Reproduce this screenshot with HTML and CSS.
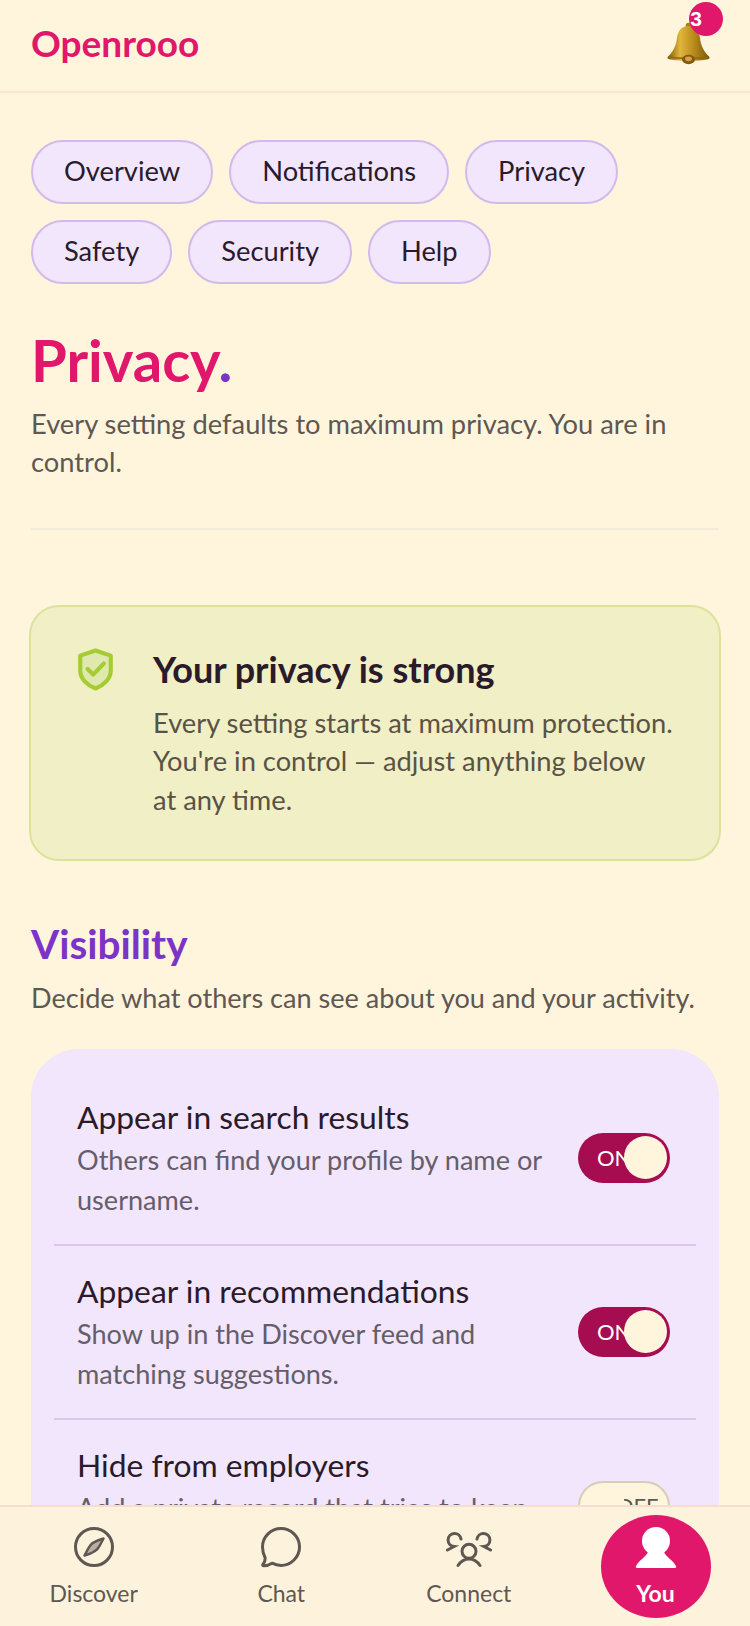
FILE: index.html
```html
<!DOCTYPE html>
<html lang="en">

<head>
    <meta charset="UTF-8">
    <meta name="viewport" content="width=device-width, initial-scale=1.0">
    <title>Openrooo - Privacy</title>
    <link rel="stylesheet" href="styles.css">
</head>

<body>
    <div class="app">
        <header class="topbar">
            <span class="logo">Openrooo</span>
            <button class="bell" aria-label="Notifications">
                <svg class="bell-icon" viewBox="0 0 44 43" width="44" height="43">
                    <defs>
                        <linearGradient id="bellGold" x1="0" y1="0" x2="1" y2="0">
                            <stop offset="0" stop-color="#7d5a0a" />
                            <stop offset="0.3" stop-color="#e2b63c" />
                            <stop offset="0.62" stop-color="#b98c1c" />
                            <stop offset="1" stop-color="#7a5608" />
                        </linearGradient>
                    </defs>
                    <circle cx="21.500" cy="3.500" r="2.800" fill="#a87f18" />
                    <path d="M21.500 4C14 4 11 9 10 16C9 24 6 30 1 34.500C0 35.500 0.500 37 2 37.200C8 38.300 15 38.700 21.500 38.700C28 38.700 35 38.300 41 37.200C42.500 37 43 35.500 42 34.500C37 30 34 24 33 16C32 9 29 4 21.500 4Z" fill="url(#bellGold)" />
                    <path d="M3 35C10 36.600 33 36.600 40 35" fill="none" stroke="#8f6a10" stroke-width="1.500" />
                    <ellipse cx="21.500" cy="37.500" rx="6.500" ry="4.700" fill="#85590f" />
                    <ellipse cx="21.500" cy="36.800" rx="3.500" ry="2.400" fill="#d6a050" />
                </svg>
                <span class="badge">3</span>
            </button>
        </header>

        <main class="content">
            <nav class="tabs">
                <a class="tab">Overview</a>
                <a class="tab">Notifications</a>
                <a class="tab">Privacy</a>
                <a class="tab">Safety</a>
                <a class="tab">Security</a>
                <a class="tab">Help</a>
            </nav>

            <div class="page-head">
                <h1>Privacy<span class="dot">.</span></h1>
                <p class="page-sub">Every setting defaults to maximum privacy. You are in control.</p>
            </div>

            <section class="strong-card">
                <svg class="shield" viewBox="0 0 40 46" width="37" height="43">
                    <path d="M20 2.500L36.500 8V24C36.500 33 29 40 20 43.500C11 40 3.500 33 3.500 24V8Z" fill="#dfe9ad" stroke="#a5cc32" stroke-width="4.500" stroke-linejoin="round" />
                    <path d="M11.500 22.500L17.500 28.500L29 16.500" fill="none" stroke="#a5cc32" stroke-width="4.500" stroke-linecap="round" stroke-linejoin="round" />
                </svg>
                <div class="strong-text">
                    <h2>Your privacy is strong</h2>
                    <p>Every setting starts at maximum protection. You're in control — adjust anything below<br>at any time.</p>
                </div>
            </section>

            <h3 class="section-title">Visibility</h3>
            <p class="section-sub">Decide what others can see about you and your activity.</p>

            <section class="settings">
                <div class="row">
                    <div class="row-text">
                        <div class="row-title">Appear in search results</div>
                        <div class="row-desc">Others can find your profile by name or username.</div>
                    </div>
                    <div class="toggle on"><span class="toggle-label">ON</span><span class="knob"></span></div>
                </div>
                <div class="row">
                    <div class="row-text">
                        <div class="row-title">Appear in recommendations</div>
                        <div class="row-desc">Show up in the Discover feed and matching suggestions.</div>
                    </div>
                    <div class="toggle on"><span class="toggle-label">ON</span><span class="knob"></span></div>
                </div>
                <div class="row">
                    <div class="row-text">
                        <div class="row-title">Hide from employers</div>
                        <div class="row-desc">Add a private record that tries to keep you hidden.</div>
                    </div>
                    <div class="toggle off"><span class="knob"></span><span class="toggle-label">OFF</span></div>
                </div>
            </section>
        </main>

        <nav class="bottom-nav">
            <a class="nav-item">
                <svg viewBox="0 0 44 44" width="44" height="44" fill="none" stroke="#5f5751" stroke-width="3">
                    <circle cx="22" cy="22" r="18.500" />
                    <path d="M31.500 13.500C26 15 18.500 18.500 16.500 23L12.500 30.500C18 29 25.500 25.500 27.500 21Z" fill="#b9b0a4" stroke-width="2.500" stroke-linejoin="round" />
                </svg>
                <span>Discover</span>
            </a>
            <a class="nav-item">
                <svg viewBox="0 0 44 44" width="44" height="44" fill="none" stroke="#5f5751" stroke-width="3" stroke-linejoin="round">
                    <path d="M22 3.500C32 3.500 40.500 11.500 40.500 22C40.500 32 32 40.500 22 40.500C18.500 40.500 15.500 39.500 13 38.200C10 40 7 41 4.500 40.800C3.500 40.700 3.500 39.800 4 39.200C5.500 37.500 6.300 35.500 6.200 33C4.500 29.500 3.500 26 3.500 22C3.500 11.500 12 3.500 22 3.500Z" />
                </svg>
                <span>Chat</span>
            </a>
            <a class="nav-item">
                <svg viewBox="0 -7 46 44" width="46" height="44" fill="none" stroke="#5f5751" stroke-width="3" stroke-linecap="round">
                    <circle cx="23" cy="19.300" r="7" />
                    <path d="M12 33.500C15 29 19 27 23 27C27 27 31 29 34 33.500" />
                    <path d="M15 7A6.500 6.500 0 1 0 8 14.500L1.500 18" />
                    <path d="M31 7A6.500 6.500 0 1 1 38 14.500L44.500 18" />
                </svg>
                <span>Connect</span>
            </a>
            <a class="nav-item active">
                <svg viewBox="0 0 42 42" width="42" height="42" fill="#fff">
                    <circle cx="21" cy="14" r="14" />
                    <path d="M13 25H29C31 30 38 33 41 39C41.500 40 41 41 40 41H2C1 41 0.500 40 1 39C4 33 11 30 13 25Z" />
                </svg>
                <span>You</span>
            </a>
        </nav>
    </div>
</body>

</html>
```

FILE: styles.css
```css
* {
    margin: 0;
    padding: 0;
    box-sizing: border-box;
}

body {
    font-family: 'Lato', 'Noto Sans', sans-serif;
    background: #fff5dd;
    color: #2a1a2a;
}

.app {
    height: 100vh;
    display: flex;
    flex-direction: column;
    overflow: hidden;
}

.topbar {
    flex: none;
    height: 93px;
    display: flex;
    align-items: flex-start;
    justify-content: space-between;
    padding: 0 39px 0 31px;
    border-bottom: 2px solid #f9e6d3;
}

.logo {
    margin-top: 21px;
    font-size: 37px;
    line-height: 44px;
    font-weight: 700;
    color: #e0176b;
}

.bell {
    position: relative;
    margin-top: 22px;
    width: 44px;
    height: 43px;
    background: none;
    border: none;
}

.bell-icon {
    display: block;
}

.badge {
    position: absolute;
    top: -20px;
    left: 22px;
    width: 34px;
    height: 34px;
    padding-right: 20px;
    border-radius: 50%;
    background: #e0176b;
    color: #fff;
    font-size: 21px;
    font-weight: 700;
    line-height: 34px;
    text-align: center;
}

.content {
    flex: 1;
    min-height: 0;
    overflow: hidden;
    padding: 47px 31px 0;
}

.tabs {
    display: flex;
    flex-wrap: wrap;
    gap: 16px;
}

.tab {
    height: 64px;
    padding: 0 31px 4px;
    display: flex;
    align-items: center;
    border: 2px solid #d4b9ec;
    border-radius: 32px;
    background: #f1e6fb;
    color: #2a1a2a;
    font-size: 27.300px;
}

.page-head {
    margin-top: 40px;
    padding-bottom: 46px;
    border-bottom: 2px solid #f3ecd9;
}

h1 {
    font-size: 58px;
    line-height: 72px;
    font-weight: 700;
    color: #e0176b;
}

.dot {
    color: #7c33c8;
}

.page-sub {
    margin-top: 9px;
    font-size: 27.300px;
    line-height: 38.400px;
    color: #5f5751;
}

.strong-card {
    margin: 75px -2px 0;
    height: 256px;
    padding: 41px 38px 0 46px;
    display: flex;
    align-items: flex-start;
    gap: 39px;
    background: #f0efc5;
    border: 2px solid #dbe39b;
    border-radius: 30px;
}

.shield {
    flex: none;
}

.strong-text h2 {
    font-size: 36px;
    line-height: 42px;
    font-weight: 700;
    color: #2a1a2a;
}

.strong-text p {
    margin-top: 14px;
    font-size: 27.300px;
    line-height: 38.500px;
    color: #5a5246;
}

.section-title {
    margin-top: 57px;
    font-size: 40.500px;
    line-height: 52px;
    font-weight: 700;
    color: #7c33c8;
}

.section-sub {
    margin-top: 9px;
    font-size: 27.100px;
    line-height: 38px;
    color: #5f5751;
}

.settings {
    margin-top: 32px;
    padding: 23px 23px 0;
    background: #f1e6fb;
    border-radius: 48px;
}

.row {
    display: flex;
    align-items: center;
    gap: 24px;
    padding: 25px 26px 23px 23px;
    border-bottom: 2px solid #dcc6ee;
}

.row:last-child {
    border-bottom: none;
}

.row-text {
    flex: 1;
}

.row-title {
    font-size: 31.800px;
    line-height: 40px;
    color: #2a1a2a;
}

.row-desc {
    margin-top: 3px;
    font-size: 27.100px;
    line-height: 40.500px;
    color: #655d6a;
}

.toggle {
    flex: none;
    width: 92px;
    height: 50px;
    margin-bottom: 2px;
    padding: 0 3px 0 19px;
    display: flex;
    align-items: center;
    justify-content: space-between;
    border-radius: 25px;
    font-size: 22px;
    overflow: hidden;
}

.toggle.on {
    background: #a60d50;
    color: #fff;
}

.toggle.on .knob {
    margin-left: -14px;
}

.toggle.off {
    padding: 0 12px 0 2px;
    background: #fff5dd;
    border: 2px solid #d8cdb8;
    color: #5f5751;
}

.toggle.off .knob {
    margin-right: -9px;
}

.toggle-label {
    flex: none;
}

.knob {
    flex: none;
    width: 43px;
    height: 43px;
    border-radius: 50%;
    background: #fff5dd;
    z-index: 1;
}

.bottom-nav {
    flex: none;
    height: 121px;
    display: grid;
    grid-template-columns: repeat(4, 1fr);
    background: #fdf3dc;
    border-top: 2px solid #f9dcd0;
}

.nav-item {
    display: flex;
    flex-direction: column;
    align-items: center;
    justify-content: flex-start;
    gap: 9px;
    padding-top: 18px;
    color: #5f5751;
    font-size: 23px;
    line-height: 30px;
}

.nav-item svg {
    display: block;
}

.nav-item.active {
    width: 110px;
    height: 103px;
    margin: 8px 0 0 38px;
    padding-top: 12px;
    border-radius: 50%;
    background: #e0176b;
    color: #fff;
    font-weight: 700;
}
```
